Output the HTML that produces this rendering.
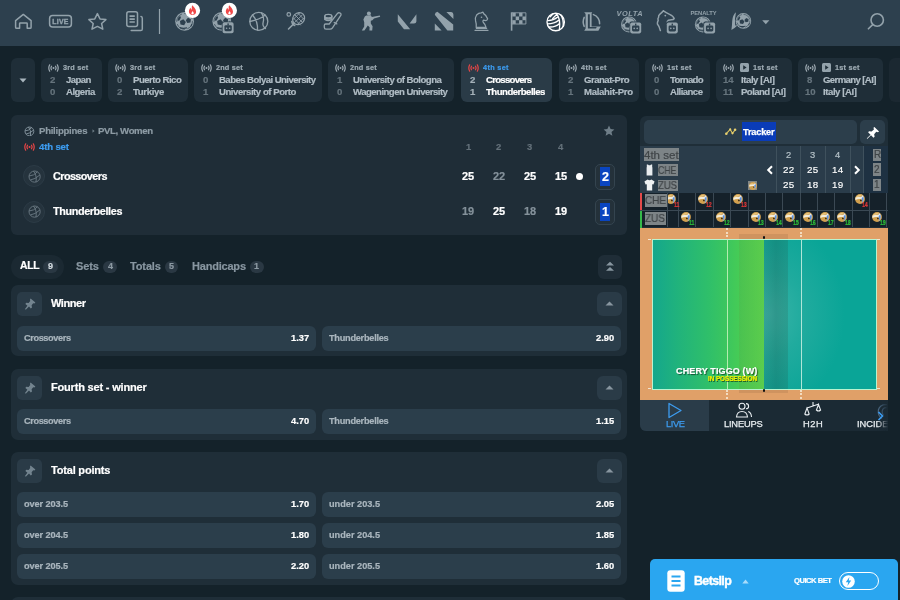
<!DOCTYPE html>
<html><head><meta charset="utf-8"><style>*{box-sizing:border-box;margin:0;padding:0}
html,body{width:900px;height:600px;overflow:hidden;background:#14222a;font-family:"Liberation Sans",sans-serif;color:#fff;position:relative}
.abs{position:absolute}
.t{position:absolute;white-space:nowrap;line-height:1;will-change:transform;-webkit-text-stroke:0.2px currentColor}
svg{display:block}
</style></head><body>
<div class="abs" style="left:0;top:0;width:900px;height:46px;background:#2d404e"></div>
<svg class="abs" style="left:0;top:0;will-change:transform" width="900" height="46" viewBox="0 0 900 46" fill="none" stroke-linecap="round" stroke-linejoin="round">
<path d="M15.6 20.6 L23.3 14.4 L31.1 20.6 V27.2 Q31.1 28.3 30 28.3 H27.2 V23.6 Q27.2 23 26.6 23 H20.2 Q19.6 23 19.6 23.6 V28.3 H16.7 Q15.6 28.3 15.6 27.2Z" stroke="#93a2ab" stroke-width="1.5"/>
<rect x="49.6" y="15.5" width="21.8" height="11.6" rx="3" stroke="#93a2ab" stroke-width="1.5"/>
<text x="60.5" y="24.1" text-anchor="middle" font-family="Liberation Sans" font-weight="bold" font-size="6.9" fill="#93a2ab" stroke="#93a2ab" stroke-width="0.35" letter-spacing="0.3">LIVE</text>
<path d="M97.4 13.6 L100 18.9 L105.9 19.6 L101.6 23.5 L102.8 29.2 L97.4 26.4 L92 29.2 L93.2 23.5 L88.9 19.6 L94.8 18.9Z" stroke="#93a2ab" stroke-width="1.5"/>
<path d="M131.2 30.6 H140.7 Q142.3 30.6 142.3 29 V18.2 Q142.3 16.8 141 16.6" stroke="#93a2ab" stroke-width="1.5"/>
<rect x="126.8" y="11.8" width="10.7" height="14.6" rx="2" stroke="#93a2ab" stroke-width="1.5"/>
<path d="M129.5 16.2 H134.8 M129.5 19.1 H134.8 M129.5 22 H134.8" stroke="#93a2ab" stroke-width="1.7" stroke-linecap="butt"/>
<rect x="158.9" y="9" width="1.2" height="25" fill="#93a2ab"/>
<g><circle cx="184.6" cy="21.4" r="9.4" fill="#93a2ab"/>
<circle cx="184.6" cy="21.4" r="7.8673913043478265" fill="none" stroke="#2d404e" stroke-width="0.7152173913043478" stroke-dasharray="9.195652173913045 3.065217391304348"/>
<polygon points="183.31,19.30 185.90,21.98 184.15,25.27 180.48,24.62 179.96,20.93" fill="#2d404e"/>
<polygon points="188.00,17.87 190.92,19.29 190.47,22.50 187.27,23.06 185.75,20.20" fill="#2d404e"/>
<path d="M177.44782608695652 20.378260869565217 Q177.85652173913041 16.904347826086955 180.10434782608695 15.678260869565216 L180.9217391304348 17.72173913043478 L179.08260869565217 20.78695652173913Z" fill="#2d404e"/>
<path d="M180.10434782608695 27.121739130434783 Q182.96521739130435 28.143478260869564 187.05217391304348 27.32608695652174 L186.84782608695653 28.552173913043475 Q182.96521739130435 29.369565217391305 179.9 28.34782608695652Z" fill="#2d404e"/>
<path d="M191.54782608695652 23.852173913043476 L190.32173913043476 26.304347826086953 L191.1391304347826 26.713043478260868 L192.36521739130436 24.465217391304346Z" fill="#2d404e"/></g>
<circle cx="192.5" cy="10.4" r="7.6" fill="#fff"/>
<path d="M192.2 5.2 C193.7 6.9 196.1 8.6 196.1 11.700000000000001 C196.1 14.0 194.3 15.0 192.5 15.0 C190.6 15.0 188.9 13.8 188.9 11.6 C188.9 9.6 189.9 8.2 190.6 7.7 C190.7 8.8 191.1 9.5 191.7 9.8 C191.9 7.9 191.6 6.6000000000000005 192.2 5.2Z" fill="#f04a4a"/>
<path d="M192.5 10.9 C193.5 11.9 193.9 12.7 193.7 13.600000000000001 C193.5 14.3 192.9 14.5 192.5 14.5 C191.9 14.5 191.3 14.0 191.4 13.3 C191.5 12.4 192.2 11.8 192.5 10.9Z" fill="#fff"/>
<g><circle cx="221.8" cy="21.4" r="9.4" fill="#93a2ab"/>
<circle cx="221.8" cy="21.4" r="7.8673913043478265" fill="none" stroke="#2d404e" stroke-width="0.7152173913043478" stroke-dasharray="9.195652173913045 3.065217391304348"/>
<polygon points="220.51,19.30 223.10,21.98 221.35,25.27 217.68,24.62 217.16,20.93" fill="#2d404e"/>
<polygon points="225.20,17.87 228.12,19.29 227.67,22.50 224.47,23.06 222.95,20.20" fill="#2d404e"/>
<path d="M214.64782608695654 20.378260869565217 Q215.05652173913046 16.904347826086955 217.30434782608697 15.678260869565216 L218.1217391304348 17.72173913043478 L216.2826086956522 20.78695652173913Z" fill="#2d404e"/>
<path d="M217.30434782608697 27.121739130434783 Q220.16521739130437 28.143478260869564 224.2521739130435 27.32608695652174 L224.04782608695655 28.552173913043475 Q220.16521739130437 29.369565217391305 217.10000000000002 28.34782608695652Z" fill="#2d404e"/>
<path d="M228.74782608695654 23.852173913043476 L227.52173913043478 26.304347826086953 L228.33913043478262 26.713043478260868 L229.56521739130437 24.465217391304346Z" fill="#2d404e"/></g>
<rect x="221.79999999999998" y="21.400000000000002" width="12.6" height="12.4" rx="2" fill="#2d404e"/>
<rect x="222.6" y="22.2" width="11" height="11" rx="1.8" fill="#93a2ab"/>
<rect x="224.4" y="25.2" width="7.4" height="6" rx="1.4" fill="#2d404e"/>
<rect x="227.4" y="23.400000000000002" width="1.4" height="2" fill="#2d404e"/>
<circle cx="226.6" cy="28.200000000000003" r="0.8" fill="#93a2ab"/><circle cx="229.6" cy="28.200000000000003" r="0.8" fill="#93a2ab"/>
<circle cx="229.4" cy="10.4" r="7.6" fill="#fff"/>
<path d="M229.1 5.2 C230.6 6.9 233.0 8.6 233.0 11.700000000000001 C233.0 14.0 231.20000000000002 15.0 229.4 15.0 C227.5 15.0 225.8 13.8 225.8 11.6 C225.8 9.6 226.8 8.2 227.5 7.7 C227.6 8.8 228.0 9.5 228.6 9.8 C228.8 7.9 228.5 6.6000000000000005 229.1 5.2Z" fill="#f04a4a"/>
<path d="M229.4 10.9 C230.4 11.9 230.8 12.7 230.6 13.600000000000001 C230.4 14.3 229.8 14.5 229.4 14.5 C228.8 14.5 228.20000000000002 14.0 228.3 13.3 C228.4 12.4 229.1 11.8 229.4 10.9Z" fill="#fff"/>
<g stroke="#93a2ab" stroke-width="1.3"><circle cx="258.8" cy="21.4" r="9"/><path d="M252.5 15 Q258 21 257.5 30.2 M265 15.2 Q259.5 19.5 249.9 21.5 M261.4 12.8 Q264.5 17.5 263.2 22 Q262 26 265.5 28.5"/></g>
<g stroke="#93a2ab" stroke-width="1.2"><ellipse cx="298.6" cy="18.6" rx="6.4" ry="5.6" transform="rotate(-45 298.6 18.6)"/><path d="M294.2 23.4 L288.5 29 M291.8 21.5 Q292.2 24.8 294.7 25.5" stroke-width="1.5"/><path d="M295 15 L302.2 22.2 M297.8 13.2 L304 19.4 M293.2 17.8 L300.4 25 M302.2 15 L295 22.2 M299.4 13.2 L293.2 19.4 M304 17.8 L297.2 24.6" stroke-width="0.9"/><circle cx="288.8" cy="14.4" r="1.8"/></g>
<g stroke="#93a2ab" stroke-width="1.3"><ellipse cx="328.3" cy="16.2" rx="3.6" ry="1.8"/><path d="M324.7 16.2 V19.4 Q328.3 21.6 331.9 19.4 V16.2 M324.7 17.8 Q328.3 20 331.9 17.8"/><path d="M339.6 12.8 Q341.6 13.4 340.8 15.4 L332.5 27.8 Q331.6 29.2 330 29.2 H326 Q324.3 29.2 324.3 27.3 V25.2 Q324.3 24 325.6 24 H329.2 L337.5 13.4 Q338.3 12.5 339.6 12.8Z"/><path d="M334.2 22.5 L336.8 23.9"/></g>
<g fill="#93a2ab"><circle cx="368.9" cy="13.6" r="2"/><path d="M366.2 15.4 L370.8 15.2 L371.8 17 L379.8 15.4 L380.2 16.8 L374 18.4 L372.4 20.2 L370.8 20.8 L370.8 23.4 L372.6 26.2 L372.2 30.6 L369.4 30.6 L369.6 27.2 L367.8 25.4 L365.8 28.6 L364.4 30.6 L361.8 30.6 L364.2 26.4 L364.2 22.2 L363.4 19.4 L364.8 16.6Z"/></g>
<path d="M397.8 14.2 L410.2 29.2 H404 L397.8 21.6Z M416.4 14.2 V21.4 Q416.2 23.4 414 23.4 H409.6Z" fill="#93a2ab"/>
<path d="M437.4 11.8 L453.2 24.4 V30.6 H447.4 L434.8 14.8 Q435 12.2 437.4 11.8Z M446.4 12.1 H451.2 Q453.4 12.4 453.4 14.6 V18.9Z M434.8 23.6 V30.6 H441.6Z" fill="#93a2ab"/>
<g stroke="#93a2ab" stroke-width="1.25" fill="none"><path d="M476.2 27.4 Q476.6 24 475.6 21 Q474.8 17.6 476.6 15 Q478.6 12.8 481.2 12.8 L483 12.2 L483.6 13.6 Q486.6 15.4 487.6 18.8 Q487.2 20.4 485.8 20.6 L483.4 20.2 Q482.4 21 483.2 22.2 Q485.6 24.6 486 27.4Z"/><path d="M475 30.3 H488 M476.4 28.4 H486.6"/></g><circle cx="481.5" cy="17.2" r="0.8" fill="#93a2ab"/>
<rect x="510.8" y="12.3" width="1.6" height="18.4" fill="#93a2ab"/>
<rect x="512.3" y="12.8" width="3.4" height="3.7" fill="#93a2ab"/><rect x="512.3" y="20.2" width="3.4" height="3.7" fill="#93a2ab"/><rect x="515.7" y="16.5" width="3.4" height="3.7" fill="#93a2ab"/><rect x="519.1" y="12.8" width="3.4" height="3.7" fill="#93a2ab"/><rect x="519.1" y="20.2" width="3.4" height="3.7" fill="#93a2ab"/><rect x="522.5" y="16.5" width="3.4" height="3.7" fill="#93a2ab"/>
<path d="M512.3 12.8 H525.9 V24 H512.3" stroke="#93a2ab" stroke-width="0.9"/>
<g stroke="#fff" stroke-width="1.35" fill="none"><circle cx="555.7" cy="22" r="8.7"/><path d="M548 20.6 Q553.6 20.4 557.4 17.2 M547.6 23.8 Q554.4 23.8 558.6 20.2 M548.8 27 Q555.4 27.4 559.6 23.4 M556.6 14 Q560.8 18.6 559.4 29.6 M560.6 14.6 Q563.8 19 563.2 26.4 M550.2 16.8 L553.2 13.8 M552.6 18.6 L556.8 14.2"/></g>
<g fill="#93a2ab"><path d="M584.2 12.2 H592.2 L591.6 13.4 V26.4 H600.8 L598.4 30.7 H584.2 L585.6 28.6 V14Z"/><path d="M587.9 14.2 H589.8 V26.9 H596.7 L596 28.6 H587.9Z" fill="#2d404e"/></g><g stroke="#93a2ab" stroke-width="1.5" fill="none"><path d="M593.4 14.6 Q599.6 17 599.6 23.8"/><path d="M584.2 17.4 Q582.2 21.8 584.2 26.4"/></g>
<text x="629.8" y="16" text-anchor="middle" font-family="Liberation Sans" font-style="italic" font-weight="bold" font-size="7.4" fill="#93a2ab" letter-spacing="0.5">VOLTA</text>
<g><circle cx="629" cy="24.4" r="8" fill="#93a2ab"/>
<circle cx="629" cy="24.4" r="6.695652173913043" fill="none" stroke="#2d404e" stroke-width="0.6086956521739131" stroke-dasharray="7.82608695652174 2.608695652173913"/>
<polygon points="627.90,22.61 630.10,24.89 628.62,27.69 625.50,27.14 625.05,24.00" fill="#2d404e"/>
<polygon points="631.90,21.39 634.38,22.60 633.99,25.34 631.28,25.81 629.98,23.38" fill="#2d404e"/>
<path d="M622.9130434782609 23.530434782608694 Q623.2608695652174 20.57391304347826 625.1739130434783 19.530434782608694 L625.8695652173913 21.269565217391303 L624.304347826087 23.878260869565217Z" fill="#2d404e"/>
<path d="M625.1739130434783 29.269565217391303 Q627.6086956521739 30.139130434782608 631.0869565217391 29.443478260869565 L630.9130434782609 30.48695652173913 Q627.6086956521739 31.182608695652174 625.0 30.31304347826087Z" fill="#2d404e"/>
<path d="M634.9130434782609 26.486956521739128 L633.8695652173913 28.57391304347826 L634.5652173913044 28.92173913043478 L635.6086956521739 27.008695652173913Z" fill="#2d404e"/></g>
<rect x="629.4000000000001" y="21.6" width="12.6" height="12.4" rx="2" fill="#2d404e"/>
<rect x="630.2" y="22.4" width="11" height="11" rx="1.8" fill="#93a2ab"/>
<rect x="632.0" y="25.4" width="7.4" height="6" rx="1.4" fill="#2d404e"/>
<rect x="635.0" y="23.6" width="1.4" height="2" fill="#2d404e"/>
<circle cx="634.2" cy="28.4" r="0.8" fill="#93a2ab"/><circle cx="637.2" cy="28.4" r="0.8" fill="#93a2ab"/>
<path d="M663.4 10.8 Q666 12.6 669.6 14.4 Q673.6 16.4 674.2 18.6 Q673.6 19.8 671.4 19.8 L668.4 20.2 Q666.8 21.2 667.2 23.4 M663.4 10.8 Q662 12.6 660.2 13.8 Q658.2 15.4 658.6 17.2 Q657.4 18.6 658.2 20.4 Q657.2 22.4 657.4 24 Q659.4 26.2 660.4 30.6" stroke="#93a2ab" stroke-width="1.5" fill="none"/><circle cx="665.3" cy="15.6" r="0.9" fill="#93a2ab"/>
<rect x="666.0" y="21.6" width="12.6" height="12.4" rx="2" fill="#2d404e"/>
<rect x="666.8" y="22.4" width="11" height="11" rx="1.8" fill="#93a2ab"/>
<rect x="668.5999999999999" y="25.4" width="7.4" height="6" rx="1.4" fill="#2d404e"/>
<rect x="671.5999999999999" y="23.6" width="1.4" height="2" fill="#2d404e"/>
<circle cx="670.8" cy="28.4" r="0.8" fill="#93a2ab"/><circle cx="673.8" cy="28.4" r="0.8" fill="#93a2ab"/>
<text x="703.5" y="14.9" text-anchor="middle" font-family="Liberation Sans" font-weight="bold" font-size="5.8" fill="#93a2ab" letter-spacing="-0.1">PENALTY</text>
<g><circle cx="702.9" cy="24.4" r="8" fill="#93a2ab"/>
<circle cx="702.9" cy="24.4" r="6.695652173913043" fill="none" stroke="#2d404e" stroke-width="0.6086956521739131" stroke-dasharray="7.82608695652174 2.608695652173913"/>
<polygon points="701.80,22.61 704.00,24.89 702.52,27.69 699.40,27.14 698.95,24.00" fill="#2d404e"/>
<polygon points="705.80,21.39 708.28,22.60 707.89,25.34 705.18,25.81 703.88,23.38" fill="#2d404e"/>
<path d="M696.8130434782609 23.530434782608694 Q697.1608695652174 20.57391304347826 699.0739130434782 19.530434782608694 L699.7695652173912 21.269565217391303 L698.204347826087 23.878260869565217Z" fill="#2d404e"/>
<path d="M699.0739130434782 29.269565217391303 Q701.5086956521739 30.139130434782608 704.9869565217391 29.443478260869565 L704.8130434782609 30.48695652173913 Q701.5086956521739 31.182608695652174 698.9 30.31304347826087Z" fill="#2d404e"/>
<path d="M708.8130434782609 26.486956521739128 L707.7695652173912 28.57391304347826 L708.4652173913043 28.92173913043478 L709.5086956521739 27.008695652173913Z" fill="#2d404e"/></g>
<rect x="703.3000000000001" y="21.6" width="12.6" height="12.4" rx="2" fill="#2d404e"/>
<rect x="704.1" y="22.4" width="11" height="11" rx="1.8" fill="#93a2ab"/>
<rect x="705.9" y="25.4" width="7.4" height="6" rx="1.4" fill="#2d404e"/>
<rect x="708.9" y="23.6" width="1.4" height="2" fill="#2d404e"/>
<circle cx="708.1" cy="28.4" r="0.8" fill="#93a2ab"/><circle cx="711.1" cy="28.4" r="0.8" fill="#93a2ab"/>
<g><circle cx="743.4" cy="20.9" r="7.8" fill="#93a2ab"/>
<circle cx="743.4" cy="20.9" r="6.528260869565218" fill="none" stroke="#2d404e" stroke-width="0.5934782608695652" stroke-dasharray="7.630434782608696 2.5434782608695654"/>
<polygon points="742.33,19.16 744.48,21.38 743.03,24.11 739.98,23.57 739.55,20.51" fill="#2d404e"/>
<polygon points="746.22,17.97 748.64,19.15 748.27,21.81 745.62,22.28 744.35,19.90" fill="#2d404e"/>
<path d="M737.4652173913043 20.052173913043475 Q737.8043478260869 17.169565217391302 739.6695652173913 16.152173913043477 L740.3478260869565 17.84782608695652 L738.8217391304347 20.391304347826086Z" fill="#2d404e"/>
<path d="M739.6695652173913 25.64782608695652 Q742.0434782608695 26.495652173913044 745.4347826086956 25.817391304347826 L745.2652173913043 26.83478260869565 Q742.0434782608695 27.51304347826087 739.5 26.665217391304346Z" fill="#2d404e"/>
<path d="M749.1652173913043 22.934782608695652 L748.1478260869565 24.969565217391303 L748.8260869565217 25.308695652173913 L749.8434782608696 23.443478260869565Z" fill="#2d404e"/></g>
<path d="M736 12.2 Q732.6 15 732.2 21 Q732 26.4 731.4 30 Q735 28 737.6 25.2 L735.2 25.6 Q734.4 18.6 736 12.2Z" fill="#93a2ab"/>
<path d="M762.2 20.2 H769.4 L765.8 24.2Z" fill="#93a2ab"/>
<g stroke="#93a2ab" stroke-width="1.6"><circle cx="877.2" cy="20" r="6.2"/><path d="M872.7 24.6 L868.4 28.8"/></g>
</svg>
<div class="abs" style="left:11px;top:58px;width:24px;height:44px;background:#1f2e38;border-radius:6px"></div>
<svg class="abs" style="left:19px;top:78px" width="8" height="5"><path d="M0.5 0.5 H7.5 L4 4.5Z" fill="#a9b6be"/></svg>
<div class="abs" style="left:41px;top:58px;width:61px;height:44px;background:#1f2e38;border-radius:6px;overflow:hidden">
<svg class="abs" style="left:7px;top:6.0px" width="11" height="8" viewBox="0 0 11 8" fill="none" stroke="#9fabb3" stroke-width="1.2" stroke-linecap="round">
<circle cx="5.5" cy="4" r="1" fill="#9fabb3" stroke="none"/>
<path d="M3.5 2.2 Q2.4 4 3.5 5.8 M7.5 2.2 Q8.6 4 7.5 5.8 M1.7 0.8 Q-0.1 4 1.7 7.2 M9.3 0.8 Q11.1 4 9.3 7.2"/></svg>
<span class="t " style="left:21.50px;top:5.78px;font-size:7.3px;color:#9eabb3;font-weight:bold;letter-spacing:0.229px">3rd set</span>
<span class="t " style="left:9.33px;top:16.67px;font-size:9.6px;color:#66747d;font-weight:bold">2</span>
<span class="t " style="left:9.33px;top:29.07px;font-size:9.6px;color:#66747d;font-weight:bold">0</span>
<span class="t " style="left:25.00px;top:16.67px;font-size:9.6px;color:#b0bcc4;font-weight:bold;letter-spacing:-0.607px">Japan</span>
<span class="t " style="left:25.00px;top:29.07px;font-size:9.6px;color:#b0bcc4;font-weight:bold;letter-spacing:-0.537px">Algeria</span>
</div>
<div class="abs" style="left:108px;top:58px;width:80px;height:44px;background:#1f2e38;border-radius:6px;overflow:hidden">
<svg class="abs" style="left:7px;top:6.0px" width="11" height="8" viewBox="0 0 11 8" fill="none" stroke="#9fabb3" stroke-width="1.2" stroke-linecap="round">
<circle cx="5.5" cy="4" r="1" fill="#9fabb3" stroke="none"/>
<path d="M3.5 2.2 Q2.4 4 3.5 5.8 M7.5 2.2 Q8.6 4 7.5 5.8 M1.7 0.8 Q-0.1 4 1.7 7.2 M9.3 0.8 Q11.1 4 9.3 7.2"/></svg>
<span class="t " style="left:21.50px;top:5.78px;font-size:7.3px;color:#9eabb3;font-weight:bold;letter-spacing:0.229px">3rd set</span>
<span class="t " style="left:9.33px;top:16.67px;font-size:9.6px;color:#66747d;font-weight:bold">0</span>
<span class="t " style="left:9.33px;top:29.07px;font-size:9.6px;color:#66747d;font-weight:bold">2</span>
<span class="t " style="left:25.00px;top:16.67px;font-size:9.6px;color:#b0bcc4;font-weight:bold;letter-spacing:-0.504px">Puerto Rico</span>
<span class="t " style="left:25.00px;top:29.07px;font-size:9.6px;color:#b0bcc4;font-weight:bold;letter-spacing:-0.352px">Turkiye</span>
</div>
<div class="abs" style="left:194px;top:58px;width:128px;height:44px;background:#1f2e38;border-radius:6px;overflow:hidden">
<svg class="abs" style="left:7px;top:6.0px" width="11" height="8" viewBox="0 0 11 8" fill="none" stroke="#9fabb3" stroke-width="1.2" stroke-linecap="round">
<circle cx="5.5" cy="4" r="1" fill="#9fabb3" stroke="none"/>
<path d="M3.5 2.2 Q2.4 4 3.5 5.8 M7.5 2.2 Q8.6 4 7.5 5.8 M1.7 0.8 Q-0.1 4 1.7 7.2 M9.3 0.8 Q11.1 4 9.3 7.2"/></svg>
<span class="t " style="left:21.50px;top:5.78px;font-size:7.3px;color:#9eabb3;font-weight:bold;letter-spacing:0.176px">2nd set</span>
<span class="t " style="left:9.33px;top:16.67px;font-size:9.6px;color:#66747d;font-weight:bold">0</span>
<span class="t " style="left:9.33px;top:29.07px;font-size:9.6px;color:#66747d;font-weight:bold">1</span>
<span class="t " style="left:25.00px;top:16.67px;font-size:9.6px;color:#b0bcc4;font-weight:bold;letter-spacing:-0.559px">Babes Bolyai University</span>
<span class="t " style="left:25.00px;top:29.07px;font-size:9.6px;color:#b0bcc4;font-weight:bold;letter-spacing:-0.468px">University of Porto</span>
</div>
<div class="abs" style="left:328px;top:58px;width:126px;height:44px;background:#1f2e38;border-radius:6px;overflow:hidden">
<svg class="abs" style="left:7px;top:6.0px" width="11" height="8" viewBox="0 0 11 8" fill="none" stroke="#9fabb3" stroke-width="1.2" stroke-linecap="round">
<circle cx="5.5" cy="4" r="1" fill="#9fabb3" stroke="none"/>
<path d="M3.5 2.2 Q2.4 4 3.5 5.8 M7.5 2.2 Q8.6 4 7.5 5.8 M1.7 0.8 Q-0.1 4 1.7 7.2 M9.3 0.8 Q11.1 4 9.3 7.2"/></svg>
<span class="t " style="left:21.50px;top:5.78px;font-size:7.3px;color:#9eabb3;font-weight:bold;letter-spacing:0.176px">2nd set</span>
<span class="t " style="left:9.33px;top:16.67px;font-size:9.6px;color:#66747d;font-weight:bold">1</span>
<span class="t " style="left:9.33px;top:29.07px;font-size:9.6px;color:#66747d;font-weight:bold">0</span>
<span class="t " style="left:25.00px;top:16.67px;font-size:9.6px;color:#b0bcc4;font-weight:bold;letter-spacing:-0.512px">University of Bologna</span>
<span class="t " style="left:25.00px;top:29.07px;font-size:9.6px;color:#b0bcc4;font-weight:bold;letter-spacing:-0.541px">Wageningen University</span>
</div>
<div class="abs" style="left:461px;top:58px;width:91px;height:44px;background:#2a3b47;border-radius:6px;overflow:hidden">
<svg class="abs" style="left:7px;top:6.0px" width="11" height="8" viewBox="0 0 11 8" fill="none" stroke="#e84646" stroke-width="1.2" stroke-linecap="round">
<circle cx="5.5" cy="4" r="1" fill="#e84646" stroke="none"/>
<path d="M3.5 2.2 Q2.4 4 3.5 5.8 M7.5 2.2 Q8.6 4 7.5 5.8 M1.7 0.8 Q-0.1 4 1.7 7.2 M9.3 0.8 Q11.1 4 9.3 7.2"/></svg>
<span class="t " style="left:21.50px;top:5.78px;font-size:7.3px;color:#3d9cf0;font-weight:bold;letter-spacing:0.330px">4th set</span>
<span class="t " style="left:9.33px;top:16.67px;font-size:9.6px;color:#a5b1b9;font-weight:bold">2</span>
<span class="t " style="left:9.33px;top:29.07px;font-size:9.6px;color:#a5b1b9;font-weight:bold">1</span>
<span class="t " style="left:25.00px;top:16.67px;font-size:9.6px;color:#ffffff;font-weight:bold;letter-spacing:-0.733px">Crossovers</span>
<span class="t " style="left:25.00px;top:29.07px;font-size:9.6px;color:#ffffff;font-weight:bold;letter-spacing:-0.514px">Thunderbelles</span>
</div>
<div class="abs" style="left:559px;top:58px;width:80px;height:44px;background:#1f2e38;border-radius:6px;overflow:hidden">
<svg class="abs" style="left:7px;top:6.0px" width="11" height="8" viewBox="0 0 11 8" fill="none" stroke="#9fabb3" stroke-width="1.2" stroke-linecap="round">
<circle cx="5.5" cy="4" r="1" fill="#9fabb3" stroke="none"/>
<path d="M3.5 2.2 Q2.4 4 3.5 5.8 M7.5 2.2 Q8.6 4 7.5 5.8 M1.7 0.8 Q-0.1 4 1.7 7.2 M9.3 0.8 Q11.1 4 9.3 7.2"/></svg>
<span class="t " style="left:21.50px;top:5.78px;font-size:7.3px;color:#9eabb3;font-weight:bold;letter-spacing:0.330px">4th set</span>
<span class="t " style="left:9.33px;top:16.67px;font-size:9.6px;color:#66747d;font-weight:bold">2</span>
<span class="t " style="left:9.33px;top:29.07px;font-size:9.6px;color:#66747d;font-weight:bold">1</span>
<span class="t " style="left:25.00px;top:16.67px;font-size:9.6px;color:#b0bcc4;font-weight:bold;letter-spacing:-0.512px">Granat-Pro</span>
<span class="t " style="left:25.00px;top:29.07px;font-size:9.6px;color:#b0bcc4;font-weight:bold;letter-spacing:-0.314px">Malahit-Pro</span>
</div>
<div class="abs" style="left:645px;top:58px;width:65px;height:44px;background:#1f2e38;border-radius:6px;overflow:hidden">
<svg class="abs" style="left:7px;top:6.0px" width="11" height="8" viewBox="0 0 11 8" fill="none" stroke="#9fabb3" stroke-width="1.2" stroke-linecap="round">
<circle cx="5.5" cy="4" r="1" fill="#9fabb3" stroke="none"/>
<path d="M3.5 2.2 Q2.4 4 3.5 5.8 M7.5 2.2 Q8.6 4 7.5 5.8 M1.7 0.8 Q-0.1 4 1.7 7.2 M9.3 0.8 Q11.1 4 9.3 7.2"/></svg>
<span class="t " style="left:21.50px;top:5.78px;font-size:7.3px;color:#9eabb3;font-weight:bold;letter-spacing:0.230px">1st set</span>
<span class="t " style="left:9.33px;top:16.67px;font-size:9.6px;color:#66747d;font-weight:bold">0</span>
<span class="t " style="left:9.33px;top:29.07px;font-size:9.6px;color:#66747d;font-weight:bold">0</span>
<span class="t " style="left:25.00px;top:16.67px;font-size:9.6px;color:#b0bcc4;font-weight:bold;letter-spacing:-0.676px">Tornado</span>
<span class="t " style="left:25.00px;top:29.07px;font-size:9.6px;color:#b0bcc4;font-weight:bold;letter-spacing:-0.542px">Alliance</span>
</div>
<div class="abs" style="left:716px;top:58px;width:76px;height:44px;background:#1f2e38;border-radius:6px;overflow:hidden">
<svg class="abs" style="left:7px;top:6.0px" width="11" height="8" viewBox="0 0 11 8" fill="none" stroke="#9fabb3" stroke-width="1.2" stroke-linecap="round">
<circle cx="5.5" cy="4" r="1" fill="#9fabb3" stroke="none"/>
<path d="M3.5 2.2 Q2.4 4 3.5 5.8 M7.5 2.2 Q8.6 4 7.5 5.8 M1.7 0.8 Q-0.1 4 1.7 7.2 M9.3 0.8 Q11.1 4 9.3 7.2"/></svg>
<svg class="abs" style="left:23.5px;top:4.800000000000001px" width="9" height="9" viewBox="0 0 9 9"><rect width="9" height="9" rx="1.5" fill="#93a2ab"/><path d="M3.2 2.2 L6.6 4.5 L3.2 6.8Z" fill="#1f2e38"/></svg>
<span class="t " style="left:37.00px;top:5.78px;font-size:7.3px;color:#9eabb3;font-weight:bold;letter-spacing:0.230px">1st set</span>
<span class="t " style="left:6.66px;top:16.67px;font-size:9.6px;color:#66747d;font-weight:bold">14</span>
<span class="t " style="left:6.93px;top:29.07px;font-size:9.6px;color:#66747d;font-weight:bold">11</span>
<span class="t " style="left:25.00px;top:16.67px;font-size:9.6px;color:#b0bcc4;font-weight:bold;letter-spacing:-0.438px">Italy [AI]</span>
<span class="t " style="left:25.00px;top:29.07px;font-size:9.6px;color:#b0bcc4;font-weight:bold;letter-spacing:-0.563px">Poland [AI]</span>
</div>
<div class="abs" style="left:798px;top:58px;width:85px;height:44px;background:#1f2e38;border-radius:6px;overflow:hidden">
<svg class="abs" style="left:7px;top:6.0px" width="11" height="8" viewBox="0 0 11 8" fill="none" stroke="#9fabb3" stroke-width="1.2" stroke-linecap="round">
<circle cx="5.5" cy="4" r="1" fill="#9fabb3" stroke="none"/>
<path d="M3.5 2.2 Q2.4 4 3.5 5.8 M7.5 2.2 Q8.6 4 7.5 5.8 M1.7 0.8 Q-0.1 4 1.7 7.2 M9.3 0.8 Q11.1 4 9.3 7.2"/></svg>
<svg class="abs" style="left:23.5px;top:4.800000000000001px" width="9" height="9" viewBox="0 0 9 9"><rect width="9" height="9" rx="1.5" fill="#93a2ab"/><path d="M3.2 2.2 L6.6 4.5 L3.2 6.8Z" fill="#1f2e38"/></svg>
<span class="t " style="left:37.00px;top:5.78px;font-size:7.3px;color:#9eabb3;font-weight:bold;letter-spacing:0.230px">1st set</span>
<span class="t " style="left:9.33px;top:16.67px;font-size:9.6px;color:#66747d;font-weight:bold">8</span>
<span class="t " style="left:6.66px;top:29.07px;font-size:9.6px;color:#66747d;font-weight:bold">10</span>
<span class="t " style="left:25.00px;top:16.67px;font-size:9.6px;color:#b0bcc4;font-weight:bold;letter-spacing:-0.622px">Germany [AI]</span>
<span class="t " style="left:25.00px;top:29.07px;font-size:9.6px;color:#b0bcc4;font-weight:bold;letter-spacing:-0.438px">Italy [AI]</span>
</div>
<div class="abs" style="left:889px;top:58px;width:60px;height:44px;background:#1b2831;border-radius:6px;overflow:hidden">
</div>
<div class="abs" style="left:11px;top:115px;width:616px;height:120px;background:#1f2d37;border-radius:6px"></div>
<svg class="abs" style="left:23.799999999999997px;top:125.6px" width="10.8" height="10.8" viewBox="-5.4 -5.4 10.8 10.8" fill="none" stroke="#8796a0" stroke-width="0.9">
<circle r="4.4"/><path d="M-0.8800000000000001 -4.4 Q1.9800000000000002 -0.8800000000000001 1.1 4.312 M-4.4 -0.44000000000000006 Q-0.44000000000000006 -0.66 2.2 -3.74 M-3.3000000000000003 2.64 Q0.44000000000000006 2.2 4.18 -1.32"/></svg>
<span class="t " style="left:38.80px;top:126.17px;font-size:9.6px;color:#8d9ba4;font-weight:bold;letter-spacing:-0.267px">Philippines</span>
<svg class="abs" style="left:91.5px;top:128.8px" width="3" height="4"><path d="M0.5 0.3 L2.6 2 L0.5 3.7Z" fill="#6f7e88"/></svg>
<span class="t " style="left:97.80px;top:126.17px;font-size:9.6px;color:#8d9ba4;font-weight:bold;letter-spacing:-0.373px">PVL, Women</span>
<svg class="abs" style="left:24px;top:142.5px" width="11" height="8" viewBox="0 0 11 8" fill="none" stroke="#e84646" stroke-width="1.2" stroke-linecap="round">
<circle cx="5.5" cy="4" r="1" fill="#e84646" stroke="none"/>
<path d="M3.5 2.2 Q2.4 4 3.5 5.8 M7.5 2.2 Q8.6 4 7.5 5.8 M1.7 0.8 Q-0.1 4 1.7 7.2 M9.3 0.8 Q11.1 4 9.3 7.2"/></svg>
<span class="t " style="left:38.80px;top:141.97px;font-size:9.6px;color:#3d9cf0;font-weight:bold;letter-spacing:-0.154px">4th set</span>
<div class="abs" style="left:23.3px;top:165.4px;width:22px;height:22px;border-radius:50%;background:#25333d;border:1px solid #2c3b46"></div>
<svg class="abs" style="left:27.699999999999996px;top:169.8px" width="13.2" height="13.2" viewBox="-6.6 -6.6 13.2 13.2" fill="none" stroke="#6c7b85" stroke-width="0.9">
<circle r="5.6"/><path d="M-1.1199999999999999 -5.6 Q2.52 -1.1199999999999999 1.4 5.4879999999999995 M-5.6 -0.5599999999999999 Q-0.5599999999999999 -0.84 2.8 -4.76 M-4.199999999999999 3.36 Q0.5599999999999999 2.8 5.319999999999999 -1.68"/></svg>
<div class="abs" style="left:23.3px;top:201px;width:22px;height:22px;border-radius:50%;background:#25333d;border:1px solid #2c3b46"></div>
<svg class="abs" style="left:27.699999999999996px;top:205.4px" width="13.2" height="13.2" viewBox="-6.6 -6.6 13.2 13.2" fill="none" stroke="#6c7b85" stroke-width="0.9">
<circle r="5.6"/><path d="M-1.1199999999999999 -5.6 Q2.52 -1.1199999999999999 1.4 5.4879999999999995 M-5.6 -0.5599999999999999 Q-0.5599999999999999 -0.84 2.8 -4.76 M-4.199999999999999 3.36 Q0.5599999999999999 2.8 5.319999999999999 -1.68"/></svg>
<span class="t " style="left:52.60px;top:170.99px;font-size:10.8px;color:#ffffff;font-weight:bold;letter-spacing:-0.557px">Crossovers</span>
<span class="t " style="left:52.60px;top:206.39px;font-size:10.8px;color:#ffffff;font-weight:bold;letter-spacing:-0.366px">Thunderbelles</span>
<svg class="abs" style="left:603px;top:125px" width="12" height="12" viewBox="0 0 12 12"><path d="M6 0.6 L7.6 4.1 L11.4 4.5 L8.5 7 L9.4 10.8 L6 8.8 L2.6 10.8 L3.5 7 L0.6 4.5 L4.4 4.1Z" fill="#6f7e88"/></svg>
<span class="t " style="left:465.69px;top:141.67px;font-size:9.4px;color:#64717a;font-weight:bold">1</span>
<span class="t " style="left:496.39px;top:141.67px;font-size:9.4px;color:#64717a;font-weight:bold">2</span>
<span class="t " style="left:527.39px;top:141.67px;font-size:9.4px;color:#64717a;font-weight:bold">3</span>
<span class="t " style="left:558.39px;top:141.67px;font-size:9.4px;color:#64717a;font-weight:bold">4</span>
<span class="t " style="left:462.18px;top:170.60px;font-size:11px;color:#fff;font-weight:bold">25</span>
<span class="t " style="left:492.88px;top:170.60px;font-size:11px;color:#84919a;font-weight:bold">22</span>
<span class="t " style="left:523.88px;top:170.60px;font-size:11px;color:#fff;font-weight:bold">25</span>
<span class="t " style="left:554.88px;top:170.60px;font-size:11px;color:#fff;font-weight:bold">15</span>
<span class="t " style="left:462.18px;top:206.00px;font-size:11px;color:#84919a;font-weight:bold">19</span>
<span class="t " style="left:492.88px;top:206.00px;font-size:11px;color:#fff;font-weight:bold">25</span>
<span class="t " style="left:523.88px;top:206.00px;font-size:11px;color:#84919a;font-weight:bold">18</span>
<span class="t " style="left:554.88px;top:206.00px;font-size:11px;color:#fff;font-weight:bold">19</span>
<div class="abs" style="left:575.9px;top:172.9px;width:7px;height:7px;border-radius:50%;background:#fff"></div>
<div class="abs" style="left:595px;top:163.6px;width:19.5px;height:26px;border-radius:5px;background:#24313a;border:1px solid #34444f"></div>
<div class="abs" style="left:599.6px;top:167.4px;width:10.8px;height:18.6px;background:#0a45c0"></div>
<span class="t " style="left:601.52px;top:170.57px;font-size:12.5px;color:#fff;font-weight:bold">2</span>
<div class="abs" style="left:595px;top:199px;width:19.5px;height:26px;border-radius:5px;background:#24313a;border:1px solid #34444f"></div>
<div class="abs" style="left:599.6px;top:202.8px;width:10.8px;height:18.6px;background:#0a45c0"></div>
<span class="t " style="left:601.52px;top:205.97px;font-size:12.5px;color:#fff;font-weight:bold">1</span>
<div class="abs" style="left:11px;top:255px;width:53px;height:24px;border-radius:12px;background:#1b2932"></div>
<span class="t " style="left:19.90px;top:261.29px;font-size:10.4px;color:#ffffff;font-weight:bold;letter-spacing:-0.299px">ALL</span>
<div class="abs" style="left:43px;top:260.6px;width:14.8px;height:12px;border-radius:6px;background:#2a3843"></div>
<span class="t " style="left:47.90px;top:262.26px;font-size:9px;color:#d5dde2;font-weight:bold">9</span>
<div class="abs" style="left:103px;top:260.6px;width:14px;height:12px;border-radius:6px;background:#2a3843"></div>
<span class="t " style="left:107.50px;top:262.26px;font-size:9px;color:#8d9aa3;font-weight:bold">4</span>
<div class="abs" style="left:165.3px;top:260.6px;width:13.2px;height:12px;border-radius:6px;background:#2a3843"></div>
<span class="t " style="left:169.40px;top:262.26px;font-size:9px;color:#8d9aa3;font-weight:bold">5</span>
<div class="abs" style="left:249.6px;top:260.6px;width:14.2px;height:12px;border-radius:6px;background:#2a3843"></div>
<span class="t " style="left:254.20px;top:262.26px;font-size:9px;color:#8d9aa3;font-weight:bold">1</span>
<span class="t " style="left:76.40px;top:261.00px;font-size:11px;color:#8896a0;font-weight:bold;letter-spacing:-0.145px">Sets</span>
<span class="t " style="left:129.80px;top:261.00px;font-size:11px;color:#8896a0;font-weight:bold;letter-spacing:-0.135px">Totals</span>
<span class="t " style="left:192.00px;top:261.00px;font-size:11px;color:#8896a0;font-weight:bold;letter-spacing:-0.204px">Handicaps</span>
<div class="abs" style="left:598px;top:255px;width:23.5px;height:23.5px;border-radius:6px;background:#1f2d37"></div>
<svg class="abs" style="left:605px;top:261px" width="10" height="11"><path d="M1 4.5 H9 L5 0.8Z M1 9.8 H9 L5 6.1Z" fill="#8896a0"/></svg>
<div class="abs" style="left:11px;top:285px;width:616px;height:71px;background:#1f2e38;border-radius:7px"></div>
<div class="abs" style="left:17px;top:291.5px;width:25px;height:24.5px;background:#2a3b47;border-radius:5px"></div>
<svg class="abs" style="left:23.5px;top:297.5px" width="12" height="12" viewBox="0 0 12 12"><path d="M6.6 0.6 L11.4 4.6 L10.4 5.6 L9.2 5.2 L7.6 7.2 L8 9.6 L6.8 10.6 L5 8.6 L2 11.4 L0.8 11.2 L3.4 7.8 L1.4 6 L2.2 4.8 L4.6 5 L6.2 3 L6 1.6Z" fill="#73848f"/></svg>
<span class="t " style="left:51.00px;top:298.20px;font-size:11px;color:#ffffff;font-weight:bold;letter-spacing:-0.436px">Winner</span>
<div class="abs" style="left:597px;top:291.5px;width:24.5px;height:24.5px;background:#2a3b47;border-radius:6px"></div>
<svg class="abs" style="left:605px;top:301px" width="9" height="5"><path d="M0.5 4.5 H8.5 L4.5 0.5Z" fill="#8896a0"/></svg>
<div class="abs" style="left:17px;top:326px;width:299px;height:24.5px;background:#2b3e4b;border-radius:6px"></div>
<span class="t " style="left:24.00px;top:334.07px;font-size:9.2px;color:#a9b5bd;font-weight:bold;letter-spacing:-0.395px">Crossovers</span>
<span class="t " style="left:290.71px;top:333.92px;font-size:9.3px;color:#ffffff;font-weight:bold">1.37</span>
<div class="abs" style="left:322px;top:326px;width:299px;height:24.5px;background:#2b3e4b;border-radius:6px"></div>
<span class="t " style="left:329.00px;top:334.07px;font-size:9.2px;color:#a9b5bd;font-weight:bold;letter-spacing:-0.258px">Thunderbelles</span>
<span class="t " style="left:595.71px;top:333.92px;font-size:9.3px;color:#ffffff;font-weight:bold">2.90</span>
<div class="abs" style="left:11px;top:369px;width:616px;height:71px;background:#1f2e38;border-radius:7px"></div>
<div class="abs" style="left:17px;top:375.5px;width:25px;height:24.5px;background:#2a3b47;border-radius:5px"></div>
<svg class="abs" style="left:23.5px;top:381.5px" width="12" height="12" viewBox="0 0 12 12"><path d="M6.6 0.6 L11.4 4.6 L10.4 5.6 L9.2 5.2 L7.6 7.2 L8 9.6 L6.8 10.6 L5 8.6 L2 11.4 L0.8 11.2 L3.4 7.8 L1.4 6 L2.2 4.8 L4.6 5 L6.2 3 L6 1.6Z" fill="#73848f"/></svg>
<span class="t " style="left:51.00px;top:382.20px;font-size:11px;color:#ffffff;font-weight:bold;letter-spacing:-0.183px">Fourth set - winner</span>
<div class="abs" style="left:597px;top:375.5px;width:24.5px;height:24.5px;background:#2a3b47;border-radius:6px"></div>
<svg class="abs" style="left:605px;top:385px" width="9" height="5"><path d="M0.5 4.5 H8.5 L4.5 0.5Z" fill="#8896a0"/></svg>
<div class="abs" style="left:17px;top:409px;width:299px;height:24.5px;background:#2b3e4b;border-radius:6px"></div>
<span class="t " style="left:24.00px;top:417.07px;font-size:9.2px;color:#a9b5bd;font-weight:bold;letter-spacing:-0.395px">Crossovers</span>
<span class="t " style="left:290.71px;top:416.92px;font-size:9.3px;color:#ffffff;font-weight:bold">4.70</span>
<div class="abs" style="left:322px;top:409px;width:299px;height:24.5px;background:#2b3e4b;border-radius:6px"></div>
<span class="t " style="left:329.00px;top:417.07px;font-size:9.2px;color:#a9b5bd;font-weight:bold;letter-spacing:-0.258px">Thunderbelles</span>
<span class="t " style="left:595.71px;top:416.92px;font-size:9.3px;color:#ffffff;font-weight:bold">1.15</span>
<div class="abs" style="left:11px;top:452px;width:616px;height:133px;background:#1f2e38;border-radius:7px"></div>
<div class="abs" style="left:17px;top:458.5px;width:25px;height:24.5px;background:#2a3b47;border-radius:5px"></div>
<svg class="abs" style="left:23.5px;top:464.5px" width="12" height="12" viewBox="0 0 12 12"><path d="M6.6 0.6 L11.4 4.6 L10.4 5.6 L9.2 5.2 L7.6 7.2 L8 9.6 L6.8 10.6 L5 8.6 L2 11.4 L0.8 11.2 L3.4 7.8 L1.4 6 L2.2 4.8 L4.6 5 L6.2 3 L6 1.6Z" fill="#73848f"/></svg>
<span class="t " style="left:51.00px;top:465.20px;font-size:11px;color:#ffffff;font-weight:bold;letter-spacing:-0.192px">Total points</span>
<div class="abs" style="left:597px;top:458.5px;width:24.5px;height:24.5px;background:#2a3b47;border-radius:6px"></div>
<svg class="abs" style="left:605px;top:468px" width="9" height="5"><path d="M0.5 4.5 H8.5 L4.5 0.5Z" fill="#8896a0"/></svg>
<div class="abs" style="left:17px;top:492px;width:299px;height:24.5px;background:#2b3e4b;border-radius:6px"></div>
<span class="t " style="left:24.00px;top:500.07px;font-size:9.2px;color:#a9b5bd;font-weight:bold;letter-spacing:-0.106px">over 203.5</span>
<span class="t " style="left:290.71px;top:499.92px;font-size:9.3px;color:#ffffff;font-weight:bold">1.70</span>
<div class="abs" style="left:322px;top:492px;width:299px;height:24.5px;background:#2b3e4b;border-radius:6px"></div>
<span class="t " style="left:329.00px;top:500.07px;font-size:9.2px;color:#a9b5bd;font-weight:bold;letter-spacing:-0.007px">under 203.5</span>
<span class="t " style="left:595.71px;top:499.92px;font-size:9.3px;color:#ffffff;font-weight:bold">2.05</span>
<div class="abs" style="left:17px;top:523px;width:299px;height:24.5px;background:#2b3e4b;border-radius:6px"></div>
<span class="t " style="left:24.00px;top:531.07px;font-size:9.2px;color:#a9b5bd;font-weight:bold;letter-spacing:-0.106px">over 204.5</span>
<span class="t " style="left:290.71px;top:530.92px;font-size:9.3px;color:#ffffff;font-weight:bold">1.80</span>
<div class="abs" style="left:322px;top:523px;width:299px;height:24.5px;background:#2b3e4b;border-radius:6px"></div>
<span class="t " style="left:329.00px;top:531.07px;font-size:9.2px;color:#a9b5bd;font-weight:bold;letter-spacing:-0.007px">under 204.5</span>
<span class="t " style="left:595.71px;top:530.92px;font-size:9.3px;color:#ffffff;font-weight:bold">1.85</span>
<div class="abs" style="left:17px;top:554px;width:299px;height:24.5px;background:#2b3e4b;border-radius:6px"></div>
<span class="t " style="left:24.00px;top:562.07px;font-size:9.2px;color:#a9b5bd;font-weight:bold;letter-spacing:-0.106px">over 205.5</span>
<span class="t " style="left:290.71px;top:561.92px;font-size:9.3px;color:#ffffff;font-weight:bold">2.20</span>
<div class="abs" style="left:322px;top:554px;width:299px;height:24.5px;background:#2b3e4b;border-radius:6px"></div>
<span class="t " style="left:329.00px;top:562.07px;font-size:9.2px;color:#a9b5bd;font-weight:bold;letter-spacing:-0.007px">under 205.5</span>
<span class="t " style="left:595.71px;top:561.92px;font-size:9.3px;color:#ffffff;font-weight:bold">1.60</span>
<div class="abs" style="left:11px;top:597px;width:616px;height:40px;background:#1f2e38;border-radius:7px"></div>
<div class="abs" style="left:640px;top:116px;width:248px;height:315px;background:#1f2e38;border-radius:6px;overflow:hidden">
</div>
<div class="abs" style="left:644px;top:119.6px;width:213px;height:24.6px;background:#2c3e4b;border-radius:5px"></div>
<div class="abs" style="left:860px;top:119.6px;width:24.6px;height:24.6px;background:#2c3e4b;border-radius:5px"></div>
<svg class="abs" style="left:724px;top:127px" width="13" height="9" viewBox="724 127 13 9"><path d="M726.3 133.7 L730.2 129.4 L732.5 133.3 L735.1 129.8" stroke="#e0c860" stroke-width="1.1" fill="none"/><g fill="#e8d070"><circle cx="726.3" cy="133.7" r="1.3"/><circle cx="730.2" cy="129.4" r="1.1"/><circle cx="732.5" cy="133.3" r="1.1"/><circle cx="735.1" cy="129.8" r="1.3"/></g></svg>
<div class="abs" style="left:742.2px;top:122.2px;width:33.4px;height:18.8px;background:#0a3cb8"></div>
<span class="t " style="left:743.20px;top:127.57px;font-size:9.2px;color:#ffffff;font-weight:bold;letter-spacing:-0.182px;-webkit-text-stroke:0.25px #fff">Tracker</span>
<svg class="abs" style="left:865.5px;top:125.5px" width="14" height="14" viewBox="0 0 12 12"><path d="M7.2 0.8 L11.2 4.8 L10.2 5.4 L8.8 5 L7 7 L7.4 9.2 L6.4 10 L4.3 7.9 L1.2 11 L0.8 11 L0.8 10.6 L3.9 7.5 L1.8 5.4 L2.6 4.4 L4.8 4.8 L6.8 3 L6.4 1.6Z" fill="#ffffff"/></svg>
<div class="abs" style="left:640px;top:146.4px;width:248px;height:46.4px;background:#2a3c4a"></div>
<div class="abs" style="left:864px;top:146.4px;width:24px;height:46.4px;background:#1e3142"></div>
<div class="abs" style="left:776.0px;top:146.4px;width:1px;height:46.4px;background:#3f515d"></div>
<div class="abs" style="left:800.0px;top:146.4px;width:1px;height:46.4px;background:#3f515d"></div>
<div class="abs" style="left:825.0px;top:146.4px;width:1px;height:46.4px;background:#3f515d"></div>
<div class="abs" style="left:850.0px;top:146.4px;width:1px;height:46.4px;background:#3f515d"></div>
<div class="abs" style="left:863.1px;top:146.4px;width:1px;height:46.4px;background:#3f515d"></div>
<div class="abs" style="left:643.8px;top:148px;width:35.2px;height:12.8px;background:#7d8487"></div>
<span class="t " style="left:644.20px;top:149.01px;font-size:11.6px;color:#3f4447;font-weight:normal;letter-spacing:-0.034px">4th set</span>
<div class="abs" style="left:658px;top:164.3px;width:19.8px;height:11.7px;background:#7d8487"></div>
<span class="t " style="left:658.40px;top:165.09px;font-size:10.6px;color:#3f4447;font-weight:normal;transform:scaleX(0.82);transform-origin:0 0">CHE</span>
<div class="abs" style="left:658px;top:179.6px;width:19.8px;height:11.7px;background:#7d8487"></div>
<span class="t " style="left:658.40px;top:180.39px;font-size:10.6px;color:#3f4447;font-weight:normal;transform:scaleX(0.9);transform-origin:0 0">ZUS</span>
<svg class="abs" style="left:645.5px;top:163.5px" width="7" height="12" viewBox="0 0 7 12"><path d="M0.8 0.5 H2 Q3.5 2.2 5 0.5 H6.2 V2.4 Q6 3 6.4 3.6 V11.5 H0.6 V3.6 Q1 3 0.8 2.4Z" fill="#e8ecef"/></svg>
<svg class="abs" style="left:643.5px;top:179px" width="11" height="12" viewBox="0 0 11 12"><path d="M3.6 0.6 Q5.5 2 7.4 0.6 L10.6 2.4 L9.4 5.6 L8.2 5.2 V11.4 H2.8 V5.2 L1.6 5.6 L0.4 2.4Z" fill="#eef1f3"/></svg>
<div class="abs" style="left:748px;top:181px;width:9px;height:9px;background:#8d8f8c;opacity:.9"></div>
<svg class="abs" style="left:748.5px;top:181.5px" width="8" height="8" viewBox="-5 -5 10 10">
<circle r="4.9" fill="#d2a04e"/><path d="M-4.2 -2 Q-1 -4.9 2.8 -4 Q-0.6 -3.4 -4.4 -0.6Z" fill="#e8c680"/>
<path d="M-4.6 -1.2 Q-0.6 -2.8 2.8 -1.8 L2 0.4 Q-1.2 -0.6 -4.6 1Z" fill="#f4ecd8"/>
<path d="M2.4 -3.8 Q5.8 -0.4 1.6 4.4 Q3 0.8 0.8 -1.2Z" fill="#dfe8f6"/><path d="M3.2 -2.6 Q4.8 0.6 1.6 4.4 Q2.6 1 1.6 -0.6Z" fill="#5f8fd2"/>
<circle cx="0.9" cy="1.4" r="0.9" fill="#3a2c18"/></svg>
<span class="t " style="left:785.89px;top:150.47px;font-size:9.4px;color:#b4c0c7;font-weight:normal;-webkit-text-stroke:0.2px #b4c0c7">2</span>
<span class="t " style="left:782.90px;top:164.88px;font-size:9.8px;color:#ffffff;font-weight:normal;letter-spacing:0.303px;-webkit-text-stroke:0.15px #fff">22</span>
<span class="t " style="left:782.90px;top:180.28px;font-size:9.8px;color:#ffffff;font-weight:normal;letter-spacing:0.303px;-webkit-text-stroke:0.15px #fff">25</span>
<span class="t " style="left:810.29px;top:150.47px;font-size:9.4px;color:#b4c0c7;font-weight:normal;-webkit-text-stroke:0.2px #b4c0c7">3</span>
<span class="t " style="left:807.30px;top:164.88px;font-size:9.8px;color:#ffffff;font-weight:normal;letter-spacing:0.303px;-webkit-text-stroke:0.15px #fff">25</span>
<span class="t " style="left:807.30px;top:180.28px;font-size:9.8px;color:#ffffff;font-weight:normal;letter-spacing:0.303px;-webkit-text-stroke:0.15px #fff">18</span>
<span class="t " style="left:835.19px;top:150.47px;font-size:9.4px;color:#b4c0c7;font-weight:normal;-webkit-text-stroke:0.2px #b4c0c7">4</span>
<span class="t " style="left:832.20px;top:164.88px;font-size:9.8px;color:#ffffff;font-weight:normal;letter-spacing:0.303px;-webkit-text-stroke:0.15px #fff">14</span>
<span class="t " style="left:832.20px;top:180.28px;font-size:9.8px;color:#ffffff;font-weight:normal;letter-spacing:0.303px;-webkit-text-stroke:0.15px #fff">19</span>
<svg class="abs" style="left:765.5px;top:164.5px" width="8" height="10" viewBox="0 0 8 10"><path d="M6 1.2 L2.2 5 L6 8.8" stroke="#fff" stroke-width="2" fill="none"/></svg>
<svg class="abs" style="left:853px;top:164.5px" width="8" height="10" viewBox="0 0 8 10"><path d="M2 1.2 L5.8 5 L2 8.8" stroke="#fff" stroke-width="2" fill="none"/></svg>
<div class="abs" style="left:873.2px;top:148.8px;width:8px;height:12.5px;background:#7d8487"></div>
<span class="t " style="left:873.59px;top:150.18px;font-size:10px;color:#3f4447;font-weight:normal">R</span>
<div class="abs" style="left:873.2px;top:163.4px;width:8px;height:12.5px;background:#7d8487"></div>
<span class="t " style="left:874.42px;top:164.78px;font-size:10px;color:#3f4447;font-weight:normal">2</span>
<div class="abs" style="left:873.2px;top:178.6px;width:8px;height:12.5px;background:#7d8487"></div>
<span class="t " style="left:874.42px;top:179.98px;font-size:10px;color:#3f4447;font-weight:normal">1</span>
<div class="abs" style="left:640px;top:192.8px;width:248px;height:34.7px;background:#15212a"></div>
<div class="abs" style="left:640px;top:209.9px;width:248px;height:1.1px;background:#3b4954"></div>
<div class="abs" style="left:640.3px;top:193px;width:1.8px;height:17px;background:#e24a4a"></div>
<div class="abs" style="left:640.3px;top:211px;width:1.8px;height:16.5px;background:#35b84a"></div>
<div class="abs" style="left:667.0px;top:192.8px;width:1px;height:34.7px;background:#3b4954"></div>
<div class="abs" style="left:678.1px;top:192.8px;width:1px;height:34.7px;background:#3b4954"></div>
<div class="abs" style="left:695.45px;top:192.8px;width:1px;height:34.7px;background:#3b4954"></div>
<div class="abs" style="left:712.8000000000001px;top:192.8px;width:1px;height:34.7px;background:#3b4954"></div>
<div class="abs" style="left:730.15px;top:192.8px;width:1px;height:34.7px;background:#3b4954"></div>
<div class="abs" style="left:747.5px;top:192.8px;width:1px;height:34.7px;background:#3b4954"></div>
<div class="abs" style="left:764.85px;top:192.8px;width:1px;height:34.7px;background:#3b4954"></div>
<div class="abs" style="left:782.2px;top:192.8px;width:1px;height:34.7px;background:#3b4954"></div>
<div class="abs" style="left:799.5500000000001px;top:192.8px;width:1px;height:34.7px;background:#3b4954"></div>
<div class="abs" style="left:816.9000000000001px;top:192.8px;width:1px;height:34.7px;background:#3b4954"></div>
<div class="abs" style="left:834.25px;top:192.8px;width:1px;height:34.7px;background:#3b4954"></div>
<div class="abs" style="left:851.6px;top:192.8px;width:1px;height:34.7px;background:#3b4954"></div>
<div class="abs" style="left:868.95px;top:192.8px;width:1px;height:34.7px;background:#3b4954"></div>
<div class="abs" style="left:886.3000000000001px;top:192.8px;width:1px;height:34.7px;background:#3b4954"></div>
<div class="abs" style="left:645px;top:194px;width:22px;height:13px;background:#7d8487"></div>
<span class="t " style="left:645.40px;top:195.30px;font-size:11px;color:#3f4447;font-weight:normal;transform:scaleX(0.9);transform-origin:0 0">CHE</span>
<div class="abs" style="left:645px;top:212px;width:21px;height:13px;background:#7d8487"></div>
<span class="t " style="left:645.40px;top:213.30px;font-size:11px;color:#3f4447;font-weight:normal;transform:scaleX(0.9);transform-origin:0 0">ZUS</span>
<div class="abs" style="left:667.5px;top:192.8px;width:220.5px;height:34.7px;overflow:hidden">
<svg class="abs" style="left:-1.5px;top:1.5999999999999943px" width="10" height="10" viewBox="-5 -5 10 10">
<circle r="4.9" fill="#d2a04e"/><path d="M-4.2 -2 Q-1 -4.9 2.8 -4 Q-0.6 -3.4 -4.4 -0.6Z" fill="#e8c680"/>
<path d="M-4.6 -1.2 Q-0.6 -2.8 2.8 -1.8 L2 0.4 Q-1.2 -0.6 -4.6 1Z" fill="#f4ecd8"/>
<path d="M2.4 -3.8 Q5.8 -0.4 1.6 4.4 Q3 0.8 0.8 -1.2Z" fill="#dfe8f6"/><path d="M3.2 -2.6 Q4.8 0.6 1.6 4.4 Q2.6 1 1.6 -0.6Z" fill="#5f8fd2"/>
<circle cx="0.9" cy="1.4" r="0.9" fill="#3a2c18"/></svg>
<span class="t " style="left:6.30px;top:8.44px;font-size:7.6px;color:#e43838;font-weight:bold;letter-spacing:-0.500px;transform:scaleX(0.72);transform-origin:0 0">11</span>
<svg class="abs" style="left:30.950000000000045px;top:1.5999999999999943px" width="10" height="10" viewBox="-5 -5 10 10">
<circle r="4.9" fill="#d2a04e"/><path d="M-4.2 -2 Q-1 -4.9 2.8 -4 Q-0.6 -3.4 -4.4 -0.6Z" fill="#e8c680"/>
<path d="M-4.6 -1.2 Q-0.6 -2.8 2.8 -1.8 L2 0.4 Q-1.2 -0.6 -4.6 1Z" fill="#f4ecd8"/>
<path d="M2.4 -3.8 Q5.8 -0.4 1.6 4.4 Q3 0.8 0.8 -1.2Z" fill="#dfe8f6"/><path d="M3.2 -2.6 Q4.8 0.6 1.6 4.4 Q2.6 1 1.6 -0.6Z" fill="#5f8fd2"/>
<circle cx="0.9" cy="1.4" r="0.9" fill="#3a2c18"/></svg>
<span class="t " style="left:38.75px;top:8.44px;font-size:7.6px;color:#e43838;font-weight:bold;letter-spacing:-0.500px;transform:scaleX(0.72);transform-origin:0 0">12</span>
<svg class="abs" style="left:65.64999999999998px;top:1.5999999999999943px" width="10" height="10" viewBox="-5 -5 10 10">
<circle r="4.9" fill="#d2a04e"/><path d="M-4.2 -2 Q-1 -4.9 2.8 -4 Q-0.6 -3.4 -4.4 -0.6Z" fill="#e8c680"/>
<path d="M-4.6 -1.2 Q-0.6 -2.8 2.8 -1.8 L2 0.4 Q-1.2 -0.6 -4.6 1Z" fill="#f4ecd8"/>
<path d="M2.4 -3.8 Q5.8 -0.4 1.6 4.4 Q3 0.8 0.8 -1.2Z" fill="#dfe8f6"/><path d="M3.2 -2.6 Q4.8 0.6 1.6 4.4 Q2.6 1 1.6 -0.6Z" fill="#5f8fd2"/>
<circle cx="0.9" cy="1.4" r="0.9" fill="#3a2c18"/></svg>
<span class="t " style="left:73.45px;top:8.44px;font-size:7.6px;color:#e43838;font-weight:bold;letter-spacing:-0.500px;transform:scaleX(0.72);transform-origin:0 0">13</span>
<svg class="abs" style="left:187.10000000000002px;top:1.5999999999999943px" width="10" height="10" viewBox="-5 -5 10 10">
<circle r="4.9" fill="#d2a04e"/><path d="M-4.2 -2 Q-1 -4.9 2.8 -4 Q-0.6 -3.4 -4.4 -0.6Z" fill="#e8c680"/>
<path d="M-4.6 -1.2 Q-0.6 -2.8 2.8 -1.8 L2 0.4 Q-1.2 -0.6 -4.6 1Z" fill="#f4ecd8"/>
<path d="M2.4 -3.8 Q5.8 -0.4 1.6 4.4 Q3 0.8 0.8 -1.2Z" fill="#dfe8f6"/><path d="M3.2 -2.6 Q4.8 0.6 1.6 4.4 Q2.6 1 1.6 -0.6Z" fill="#5f8fd2"/>
<circle cx="0.9" cy="1.4" r="0.9" fill="#3a2c18"/></svg>
<span class="t " style="left:194.90px;top:8.44px;font-size:7.6px;color:#e43838;font-weight:bold;letter-spacing:-0.500px;transform:scaleX(0.72);transform-origin:0 0">14</span>
<svg class="abs" style="left:13.600000000000023px;top:19.099999999999994px" width="10" height="10" viewBox="-5 -5 10 10">
<circle r="4.9" fill="#d2a04e"/><path d="M-4.2 -2 Q-1 -4.9 2.8 -4 Q-0.6 -3.4 -4.4 -0.6Z" fill="#e8c680"/>
<path d="M-4.6 -1.2 Q-0.6 -2.8 2.8 -1.8 L2 0.4 Q-1.2 -0.6 -4.6 1Z" fill="#f4ecd8"/>
<path d="M2.4 -3.8 Q5.8 -0.4 1.6 4.4 Q3 0.8 0.8 -1.2Z" fill="#dfe8f6"/><path d="M3.2 -2.6 Q4.8 0.6 1.6 4.4 Q2.6 1 1.6 -0.6Z" fill="#5f8fd2"/>
<circle cx="0.9" cy="1.4" r="0.9" fill="#3a2c18"/></svg>
<span class="t " style="left:21.40px;top:25.94px;font-size:7.6px;color:#2fc43a;font-weight:bold;letter-spacing:-0.500px;transform:scaleX(0.72);transform-origin:0 0">11</span>
<svg class="abs" style="left:48.30000000000007px;top:19.099999999999994px" width="10" height="10" viewBox="-5 -5 10 10">
<circle r="4.9" fill="#d2a04e"/><path d="M-4.2 -2 Q-1 -4.9 2.8 -4 Q-0.6 -3.4 -4.4 -0.6Z" fill="#e8c680"/>
<path d="M-4.6 -1.2 Q-0.6 -2.8 2.8 -1.8 L2 0.4 Q-1.2 -0.6 -4.6 1Z" fill="#f4ecd8"/>
<path d="M2.4 -3.8 Q5.8 -0.4 1.6 4.4 Q3 0.8 0.8 -1.2Z" fill="#dfe8f6"/><path d="M3.2 -2.6 Q4.8 0.6 1.6 4.4 Q2.6 1 1.6 -0.6Z" fill="#5f8fd2"/>
<circle cx="0.9" cy="1.4" r="0.9" fill="#3a2c18"/></svg>
<span class="t " style="left:56.10px;top:25.94px;font-size:7.6px;color:#2fc43a;font-weight:bold;letter-spacing:-0.500px;transform:scaleX(0.72);transform-origin:0 0">12</span>
<svg class="abs" style="left:83.0px;top:19.099999999999994px" width="10" height="10" viewBox="-5 -5 10 10">
<circle r="4.9" fill="#d2a04e"/><path d="M-4.2 -2 Q-1 -4.9 2.8 -4 Q-0.6 -3.4 -4.4 -0.6Z" fill="#e8c680"/>
<path d="M-4.6 -1.2 Q-0.6 -2.8 2.8 -1.8 L2 0.4 Q-1.2 -0.6 -4.6 1Z" fill="#f4ecd8"/>
<path d="M2.4 -3.8 Q5.8 -0.4 1.6 4.4 Q3 0.8 0.8 -1.2Z" fill="#dfe8f6"/><path d="M3.2 -2.6 Q4.8 0.6 1.6 4.4 Q2.6 1 1.6 -0.6Z" fill="#5f8fd2"/>
<circle cx="0.9" cy="1.4" r="0.9" fill="#3a2c18"/></svg>
<span class="t " style="left:90.80px;top:25.94px;font-size:7.6px;color:#2fc43a;font-weight:bold;letter-spacing:-0.500px;transform:scaleX(0.72);transform-origin:0 0">13</span>
<svg class="abs" style="left:100.35000000000002px;top:19.099999999999994px" width="10" height="10" viewBox="-5 -5 10 10">
<circle r="4.9" fill="#d2a04e"/><path d="M-4.2 -2 Q-1 -4.9 2.8 -4 Q-0.6 -3.4 -4.4 -0.6Z" fill="#e8c680"/>
<path d="M-4.6 -1.2 Q-0.6 -2.8 2.8 -1.8 L2 0.4 Q-1.2 -0.6 -4.6 1Z" fill="#f4ecd8"/>
<path d="M2.4 -3.8 Q5.8 -0.4 1.6 4.4 Q3 0.8 0.8 -1.2Z" fill="#dfe8f6"/><path d="M3.2 -2.6 Q4.8 0.6 1.6 4.4 Q2.6 1 1.6 -0.6Z" fill="#5f8fd2"/>
<circle cx="0.9" cy="1.4" r="0.9" fill="#3a2c18"/></svg>
<span class="t " style="left:108.15px;top:25.94px;font-size:7.6px;color:#2fc43a;font-weight:bold;letter-spacing:-0.500px;transform:scaleX(0.72);transform-origin:0 0">14</span>
<svg class="abs" style="left:117.70000000000005px;top:19.099999999999994px" width="10" height="10" viewBox="-5 -5 10 10">
<circle r="4.9" fill="#d2a04e"/><path d="M-4.2 -2 Q-1 -4.9 2.8 -4 Q-0.6 -3.4 -4.4 -0.6Z" fill="#e8c680"/>
<path d="M-4.6 -1.2 Q-0.6 -2.8 2.8 -1.8 L2 0.4 Q-1.2 -0.6 -4.6 1Z" fill="#f4ecd8"/>
<path d="M2.4 -3.8 Q5.8 -0.4 1.6 4.4 Q3 0.8 0.8 -1.2Z" fill="#dfe8f6"/><path d="M3.2 -2.6 Q4.8 0.6 1.6 4.4 Q2.6 1 1.6 -0.6Z" fill="#5f8fd2"/>
<circle cx="0.9" cy="1.4" r="0.9" fill="#3a2c18"/></svg>
<span class="t " style="left:125.50px;top:25.94px;font-size:7.6px;color:#2fc43a;font-weight:bold;letter-spacing:-0.500px;transform:scaleX(0.72);transform-origin:0 0">15</span>
<svg class="abs" style="left:135.05000000000007px;top:19.099999999999994px" width="10" height="10" viewBox="-5 -5 10 10">
<circle r="4.9" fill="#d2a04e"/><path d="M-4.2 -2 Q-1 -4.9 2.8 -4 Q-0.6 -3.4 -4.4 -0.6Z" fill="#e8c680"/>
<path d="M-4.6 -1.2 Q-0.6 -2.8 2.8 -1.8 L2 0.4 Q-1.2 -0.6 -4.6 1Z" fill="#f4ecd8"/>
<path d="M2.4 -3.8 Q5.8 -0.4 1.6 4.4 Q3 0.8 0.8 -1.2Z" fill="#dfe8f6"/><path d="M3.2 -2.6 Q4.8 0.6 1.6 4.4 Q2.6 1 1.6 -0.6Z" fill="#5f8fd2"/>
<circle cx="0.9" cy="1.4" r="0.9" fill="#3a2c18"/></svg>
<span class="t " style="left:142.85px;top:25.94px;font-size:7.6px;color:#2fc43a;font-weight:bold;letter-spacing:-0.500px;transform:scaleX(0.72);transform-origin:0 0">16</span>
<svg class="abs" style="left:152.4000000000001px;top:19.099999999999994px" width="10" height="10" viewBox="-5 -5 10 10">
<circle r="4.9" fill="#d2a04e"/><path d="M-4.2 -2 Q-1 -4.9 2.8 -4 Q-0.6 -3.4 -4.4 -0.6Z" fill="#e8c680"/>
<path d="M-4.6 -1.2 Q-0.6 -2.8 2.8 -1.8 L2 0.4 Q-1.2 -0.6 -4.6 1Z" fill="#f4ecd8"/>
<path d="M2.4 -3.8 Q5.8 -0.4 1.6 4.4 Q3 0.8 0.8 -1.2Z" fill="#dfe8f6"/><path d="M3.2 -2.6 Q4.8 0.6 1.6 4.4 Q2.6 1 1.6 -0.6Z" fill="#5f8fd2"/>
<circle cx="0.9" cy="1.4" r="0.9" fill="#3a2c18"/></svg>
<span class="t " style="left:160.20px;top:25.94px;font-size:7.6px;color:#2fc43a;font-weight:bold;letter-spacing:-0.500px;transform:scaleX(0.72);transform-origin:0 0">17</span>
<svg class="abs" style="left:169.75px;top:19.099999999999994px" width="10" height="10" viewBox="-5 -5 10 10">
<circle r="4.9" fill="#d2a04e"/><path d="M-4.2 -2 Q-1 -4.9 2.8 -4 Q-0.6 -3.4 -4.4 -0.6Z" fill="#e8c680"/>
<path d="M-4.6 -1.2 Q-0.6 -2.8 2.8 -1.8 L2 0.4 Q-1.2 -0.6 -4.6 1Z" fill="#f4ecd8"/>
<path d="M2.4 -3.8 Q5.8 -0.4 1.6 4.4 Q3 0.8 0.8 -1.2Z" fill="#dfe8f6"/><path d="M3.2 -2.6 Q4.8 0.6 1.6 4.4 Q2.6 1 1.6 -0.6Z" fill="#5f8fd2"/>
<circle cx="0.9" cy="1.4" r="0.9" fill="#3a2c18"/></svg>
<span class="t " style="left:177.55px;top:25.94px;font-size:7.6px;color:#2fc43a;font-weight:bold;letter-spacing:-0.500px;transform:scaleX(0.72);transform-origin:0 0">18</span>
<svg class="abs" style="left:204.45000000000005px;top:19.099999999999994px" width="10" height="10" viewBox="-5 -5 10 10">
<circle r="4.9" fill="#d2a04e"/><path d="M-4.2 -2 Q-1 -4.9 2.8 -4 Q-0.6 -3.4 -4.4 -0.6Z" fill="#e8c680"/>
<path d="M-4.6 -1.2 Q-0.6 -2.8 2.8 -1.8 L2 0.4 Q-1.2 -0.6 -4.6 1Z" fill="#f4ecd8"/>
<path d="M2.4 -3.8 Q5.8 -0.4 1.6 4.4 Q3 0.8 0.8 -1.2Z" fill="#dfe8f6"/><path d="M3.2 -2.6 Q4.8 0.6 1.6 4.4 Q2.6 1 1.6 -0.6Z" fill="#5f8fd2"/>
<circle cx="0.9" cy="1.4" r="0.9" fill="#3a2c18"/></svg>
<span class="t " style="left:212.25px;top:25.94px;font-size:7.6px;color:#2fc43a;font-weight:bold;letter-spacing:-0.500px;transform:scaleX(0.72);transform-origin:0 0">19</span>
</div>
<div class="abs" style="left:640px;top:227.5px;width:248px;height:172.5px;background:#e0a068"></div>
<div class="abs" style="left:652.5px;top:239.5px;width:111.5px;height:149px;background:linear-gradient(90deg,#14a78c 0%,#22b47a 25%,#2fbf6a 50%,#3cc65e 67%,#48cd54 80%,#56d44e 100%)"></div>
<div class="abs" style="left:764px;top:239.5px;width:111.5px;height:149px;background:radial-gradient(ellipse 75px 95px at 5% 50%,#38b4a8 0%,#20ab9e 45%,#0aa597 100%)"></div>
<div class="abs" style="left:739px;top:234px;width:49px;height:159px;background:rgba(60,40,20,.10)"></div>
<div class="abs" style="left:739px;top:239.5px;width:25px;height:149px;background:linear-gradient(90deg,rgba(95,220,90,.2),rgba(110,230,90,.3))"></div>
<div class="abs" style="left:764px;top:239.5px;width:24px;height:149px;background:linear-gradient(90deg,rgba(0,40,40,.0),rgba(0,40,40,.10) 50%,rgba(0,40,40,.03))"></div>
<div class="abs" style="left:651.5px;top:238.5px;width:225px;height:151px;border:1px solid #b8f4d0"></div>
<div class="abs" style="left:726.5px;top:239.5px;width:1px;height:149px;background:#b4ecb0"></div>
<div class="abs" style="left:800.5px;top:239.5px;width:1px;height:149px;background:#b0e6d8"></div>
<div class="abs" style="left:726.4px;top:228px;width:1.2px;height:10.5px;background:repeating-linear-gradient(180deg,#f3dcc0 0 2px,transparent 2px 3.5px)"></div>
<div class="abs" style="left:726.4px;top:389.5px;width:1.2px;height:10px;background:repeating-linear-gradient(180deg,#f3dcc0 0 2px,transparent 2px 3.5px)"></div>
<div class="abs" style="left:800.4px;top:228px;width:1.2px;height:10.5px;background:repeating-linear-gradient(180deg,#f3dcc0 0 2px,transparent 2px 3.5px)"></div>
<div class="abs" style="left:800.4px;top:389.5px;width:1.2px;height:10px;background:repeating-linear-gradient(180deg,#f3dcc0 0 2px,transparent 2px 3.5px)"></div>
<div class="abs" style="left:648px;top:238.5px;width:3px;height:1.2px;background:#f3e4d0"></div>
<div class="abs" style="left:648px;top:388.3px;width:3px;height:1.2px;background:#f3e4d0"></div>
<div class="abs" style="left:877px;top:238.5px;width:3px;height:1.2px;background:#f3e4d0"></div>
<div class="abs" style="left:877px;top:388.3px;width:3px;height:1.2px;background:#f3e4d0"></div>
<div class="abs" style="left:762.7px;top:236px;width:2.6px;height:2.6px;border-radius:50%;background:#111"></div>
<div class="abs" style="left:762.7px;top:389px;width:2.6px;height:2.6px;border-radius:50%;background:#111"></div>
<span class="t " style="left:676.10px;top:366.66px;font-size:9px;color:#ffffff;font-weight:bold;letter-spacing:0.131px;text-shadow:1px 1px 1px rgba(0,0,0,.6)">CHERY TIGGO (W)</span>
<span class="t " style="left:708.20px;top:376.12px;font-size:6.4px;color:#eef000;font-weight:bold;letter-spacing:-0.089px;text-shadow:0.8px 0.8px 0 rgba(0,0,0,.6)">IN POSSESSION</span>
<div class="abs" style="left:640px;top:400px;width:248px;height:31.2px;background:#1b2a34;border-radius:0 0 6px 6px;overflow:hidden"><div class="abs" style="left:0;top:0;width:69px;height:31.2px;background:#2a3c49"></div></div>
<svg class="abs" style="left:667px;top:401.5px" width="16" height="17" viewBox="0 0 16 17"><path d="M2 1.5 L14 8.5 L2 15.5Z" stroke="#3d9cf0" stroke-width="1.3" fill="none" stroke-linejoin="round"/></svg>
<span class="t " style="left:665.55px;top:420.12px;font-size:9.3px;color:#3d9cf0;font-weight:normal;letter-spacing:-0.418px;-webkit-text-stroke:0.25px #3d9cf0">LIVE</span>
<svg class="abs" style="left:735px;top:402px" width="18" height="16" viewBox="0 0 18 16" fill="none" stroke="#e9eef1" stroke-width="1.1"><circle cx="7" cy="4.2" r="3"/><path d="M1.5 15 Q2 9.5 7 9.5 Q12 9.5 12.5 15 Z"/><path d="M11 1.6 Q13.6 1.6 13.6 4.2 Q13.6 6.8 11 6.8 M13.2 9.6 Q16.2 10.6 16.5 15"/></svg>
<span class="t " style="left:724.40px;top:420.12px;font-size:9.3px;color:#e9eef1;font-weight:normal;letter-spacing:-0.197px;-webkit-text-stroke:0.25px #e9eef1">LINEUPS</span>
<svg class="abs" style="left:804px;top:401px" width="18" height="17" viewBox="0 0 18 17" fill="none" stroke="#e9eef1" stroke-width="1.1"><path d="M3 7 L15 3 M9 1 V5"/><path d="M3 7 L0.8 13 Q3 15 5.2 13Z M14.5 3.5 L12.4 9 Q14.5 11 16.6 9Z"/></svg>
<span class="t " style="left:802.80px;top:420.12px;font-size:9.3px;color:#e9eef1;font-weight:normal;letter-spacing:0.501px;-webkit-text-stroke:0.25px #e9eef1">H2H</span>
<div class="abs" style="left:849px;top:400px;width:39px;height:31.2px;overflow:hidden">
<svg class="abs" style="left:25px;top:3px" width="14" height="18" viewBox="0 0 14 18" fill="none" stroke="#52708c" stroke-width="1.2"><path d="M13 1.6 Q6 1 4.4 7 Q3.6 12.6 8 15.6 M12.6 4.6 Q9 4.2 8.2 8.2 Q8 10.6 9.6 12"/></svg>
<span class="t " style="left:8.00px;top:20.12px;font-size:9.3px;color:#e9eef1;font-weight:normal;-webkit-text-stroke:0.25px #e9eef1">INCIDENTS</span>
<div class="abs" style="left:28px;top:0;width:11px;height:31.2px;background:linear-gradient(90deg,rgba(27,42,52,0),#1b2a34)"></div>
<svg class="abs" style="left:28px;top:11px" width="7" height="10" viewBox="0 0 7 10"><path d="M1.5 1 L5.5 5 L1.5 9" stroke="#3d9cf0" stroke-width="1.6" fill="none"/></svg>
</div>
<div class="abs" style="left:650.4px;top:559.4px;width:247.6px;height:45px;background:#2aa6f0;border-radius:5px 5px 0 0"></div>
<svg class="abs" style="left:666.5px;top:570px" width="18" height="22" viewBox="0 0 18 22"><rect x="0.3" y="0.3" width="17.4" height="21.4" rx="3" fill="#fff"/><path d="M4.5 6.5 H13.5 M4.5 11 H13.5 M4.5 15.5 H13.5" stroke="#2aa6f0" stroke-width="1.8"/></svg>
<span class="t " style="left:694.20px;top:575.02px;font-size:12.4px;color:#ffffff;font-weight:bold;letter-spacing:-0.585px;-webkit-text-stroke:0.4px #fff">Betslip</span>
<svg class="abs" style="left:741.5px;top:578.5px" width="7" height="5"><path d="M0.3 4.5 H6.7 L3.5 0.6Z" fill="#a9dcfb"/></svg>
<span class="t " style="left:794.30px;top:577.14px;font-size:7.6px;color:#ffffff;font-weight:bold;letter-spacing:-0.471px">QUICK BET</span>
<div class="abs" style="left:839px;top:572.4px;width:39.7px;height:17.3px;border:1.7px solid #fff;border-radius:9px"></div>
<svg class="abs" style="left:841.5px;top:574.5px" width="13" height="13" viewBox="0 0 13 13"><circle cx="6.5" cy="6.5" r="6.3" fill="#fff"/><path d="M7.4 2 L3.8 7.2 H6.2 L5.4 11 L9.2 5.6 H6.8Z" fill="#2aa6f0"/></svg>
</body></html>
